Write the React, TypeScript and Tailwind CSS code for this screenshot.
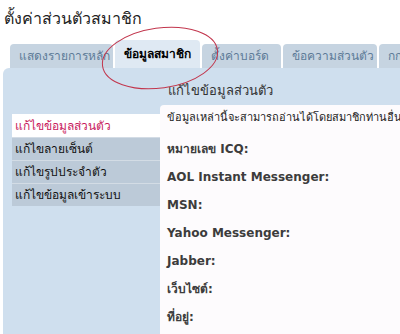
const tabs = [
  { label: 'แสดงรายการหลัก', w: 'w-[103px]' },
  { label: 'ข้อมูลสมาชิก', w: 'w-[85px]' },
  { label: 'ตั้งค่าบอร์ด', w: 'w-[79px]' },
  { label: 'ข้อความส่วนตัว', w: 'w-[94px]' },
  { label: 'กก', w: 'w-[40px]' },
]

const menu = ['แก้ไขข้อมูลส่วนตัว', 'แก้ไขลายเซ็นต์', 'แก้ไขรูปประจำตัว', 'แก้ไขข้อมูลเข้าระบบ']

const fields = ['หมายเลข ICQ:', 'AOL Instant Messenger:', 'MSN:', 'Yahoo Messenger:', 'Jabber:', 'เว็บไซต์:', 'ที่อยู่:']

export default function App() {
  return (
    <div className="relative h-[334px] w-[400px] overflow-hidden bg-white font-['Tahoma','DejaVu_Sans',sans-serif] text-black">
      <h1 className="whitespace-nowrap px-[4px] pt-[8px] text-[16px] leading-[22px] text-[#222]">ตั้งค่าส่วนตัวสมาชิก</h1>

      {/* tabs */}
      <div className="mt-[12px] flex h-[26px] items-end gap-[2px] whitespace-nowrap pl-[10px]">
        {tabs.map((t, i) =>
          i === 1 ? (
            <div
              key={t.label}
              className={`flex h-[28px] shrink-0 items-center justify-center rounded-t-[4px] bg-[#dfe9f3] text-[12px] font-bold text-black ${t.w}`}
            >
              {t.label}
            </div>
          ) : (
            <div
              key={t.label}
              className={`flex h-[24px] shrink-0 items-center rounded-t-[4px] bg-[#c6d4e1] pl-[9px] text-[12px] text-[#5d7b98] ${t.w}`}
            >
              {t.label}
            </div>
          ),
        )}
      </div>

      {/* panel */}
      <div className="ml-[3px] flex h-[270px] rounded-tl-[6px] bg-[#cfdfee] pl-[9px]">
        <div className="flex w-[148px] shrink-0 flex-col pt-[46px]">
          {menu.map((m, i) => (
            <div
              key={m}
              className={
                i === 0
                  ? 'flex h-[23px] items-center whitespace-nowrap bg-white px-[3px] text-[12px] text-[#c81a5e]'
                  : 'flex h-[23px] items-center whitespace-nowrap border-t border-[#d3dce5] bg-[#bccad8] px-[3px] text-[12px] text-[#111]'
              }
            >
              {m}
            </div>
          ))}
        </div>
        <div className="flex min-w-0 flex-1 flex-col">
          <div className="flex h-[37px] items-end whitespace-nowrap pb-[5px] pl-[8px] text-[13px] text-[#333]">แก้ไขข้อมูลส่วนตัว</div>
          <div className="flex-1 overflow-hidden rounded-tl-[4px] bg-[#fdfbfd] pl-[7px] pt-[4px]">
            <p className="h-[28px] whitespace-nowrap text-[11px] leading-[18px] text-[#222]">ข้อมูลเหล่านี้จะสามารถอ่านได้โดยสมาชิกท่านอื่น</p>
            {fields.map((f) => (
              <p key={f} className="h-[28px] whitespace-nowrap pt-[3px] text-[12px] leading-[18px] font-bold text-[#3c3c3c]">
                {f}
              </p>
            ))}
          </div>
        </div>
      </div>

      {/* red hand-drawn circle */}
      <svg className="pointer-events-none absolute left-0 top-0" width="400" height="334">
        <ellipse cx="160" cy="58" rx="58" ry="30" fill="none" stroke="#c2364d" strokeWidth="1" transform="rotate(-8 160 58)" />
      </svg>
    </div>
  )
}
